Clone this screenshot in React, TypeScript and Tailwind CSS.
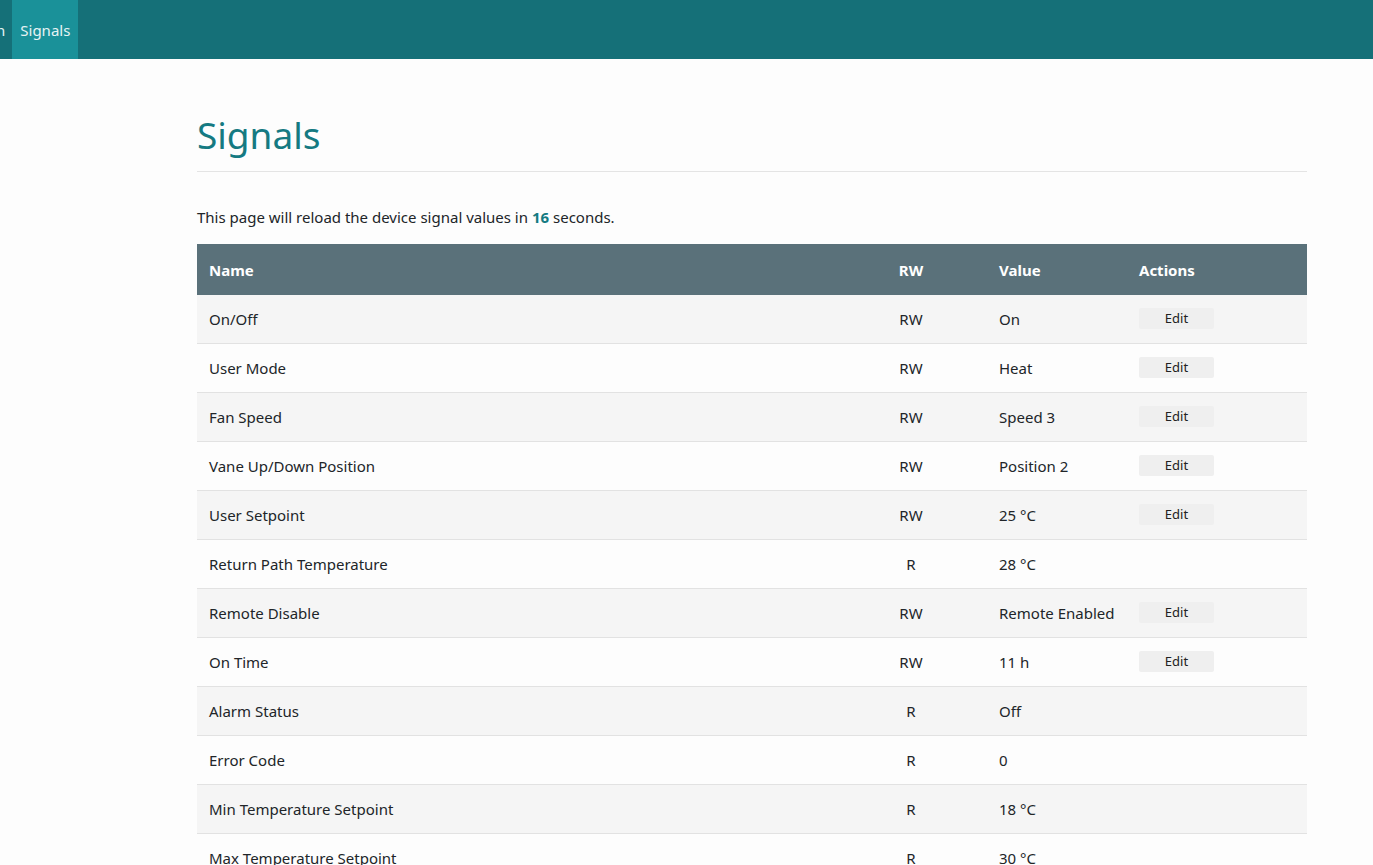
import React from "react";

const rows: { name: string; rw: string; value: string; edit: boolean }[] = [
  { name: "On/Off", rw: "RW", value: "On", edit: true },
  { name: "User Mode", rw: "RW", value: "Heat", edit: true },
  { name: "Fan Speed", rw: "RW", value: "Speed 3", edit: true },
  { name: "Vane Up/Down Position", rw: "RW", value: "Position 2", edit: true },
  { name: "User Setpoint", rw: "RW", value: "25 °C", edit: true },
  { name: "Return Path Temperature", rw: "R", value: "28 °C", edit: false },
  { name: "Remote Disable", rw: "RW", value: "Remote Enabled", edit: true },
  { name: "On Time", rw: "RW", value: "11 h", edit: true },
  { name: "Alarm Status", rw: "R", value: "Off", edit: false },
  { name: "Error Code", rw: "R", value: "0", edit: false },
  { name: "Min Temperature Setpoint", rw: "R", value: "18 °C", edit: false },
  { name: "Max Temperature Setpoint", rw: "R", value: "30 °C", edit: false },
];

export default function App() {
  return (
    <div
      className="min-h-screen bg-[#fdfdfd] text-[#212529] overflow-hidden"
      style={{ fontFamily: '"Noto Sans", "Open Sans", sans-serif' }}
    >
      <nav className="h-[59px] bg-[#157078] flex items-stretch">
        <div className="flex items-center pt-[1px] -ml-[4px] pr-[7px] text-[15px] text-[#e6f3f4]">n</div>
        <div className="flex items-center pt-[1px] px-[8px] bg-[#1a9199] text-[15px] text-[#e6f3f4]">Signals</div>
      </nav>
      <main className="ml-[197px] w-[1110px]">
        <h1 className="pt-[47px] text-[37px] leading-[58px] text-[#157a82] font-normal">Signals</h1>
        <hr className="mt-[7px] border-0 border-t border-[#e4e4e4]" />
        <p className="mt-[34px] text-[15px] leading-[22px]">
          This page will reload the device signal values in{" "}
          <span className="font-bold text-[#157a82]">16</span> seconds.
        </p>
        <div className="mt-[16px]">
          <div className="grid grid-cols-[638px_152px_140px_180px] h-[51px] pt-[1px] bg-[#5a717a] text-white font-bold text-[15px] items-center">
            <div className="pl-[12px]">Name</div>
            <div className="text-center">RW</div>
            <div className="pl-[12px]">Value</div>
            <div className="pl-[12px]">Actions</div>
          </div>
          {rows.map((r, i) => (
            <div
              key={r.name}
              className={`grid grid-cols-[638px_152px_140px_180px] h-[49px] pt-[1px] items-center text-[15px] border-b border-[#e2e2e2] ${
                i % 2 === 0 ? "bg-[#f5f5f5]" : "bg-[#fdfdfd]"
              }`}
            >
              <div className="pl-[12px]">{r.name}</div>
              <div className="text-center">{r.rw}</div>
              <div className="pl-[12px]">{r.value}</div>
              <div className="pl-[12px] flex">
                {r.edit && (
                  <button className="-mt-[2px] w-[75px] h-[21px] bg-[#efefef] rounded-[2px] text-[13px] leading-[21px] text-[#222]">
                    Edit
                  </button>
                )}
              </div>
            </div>
          ))}
        </div>
      </main>
    </div>
  );
}
